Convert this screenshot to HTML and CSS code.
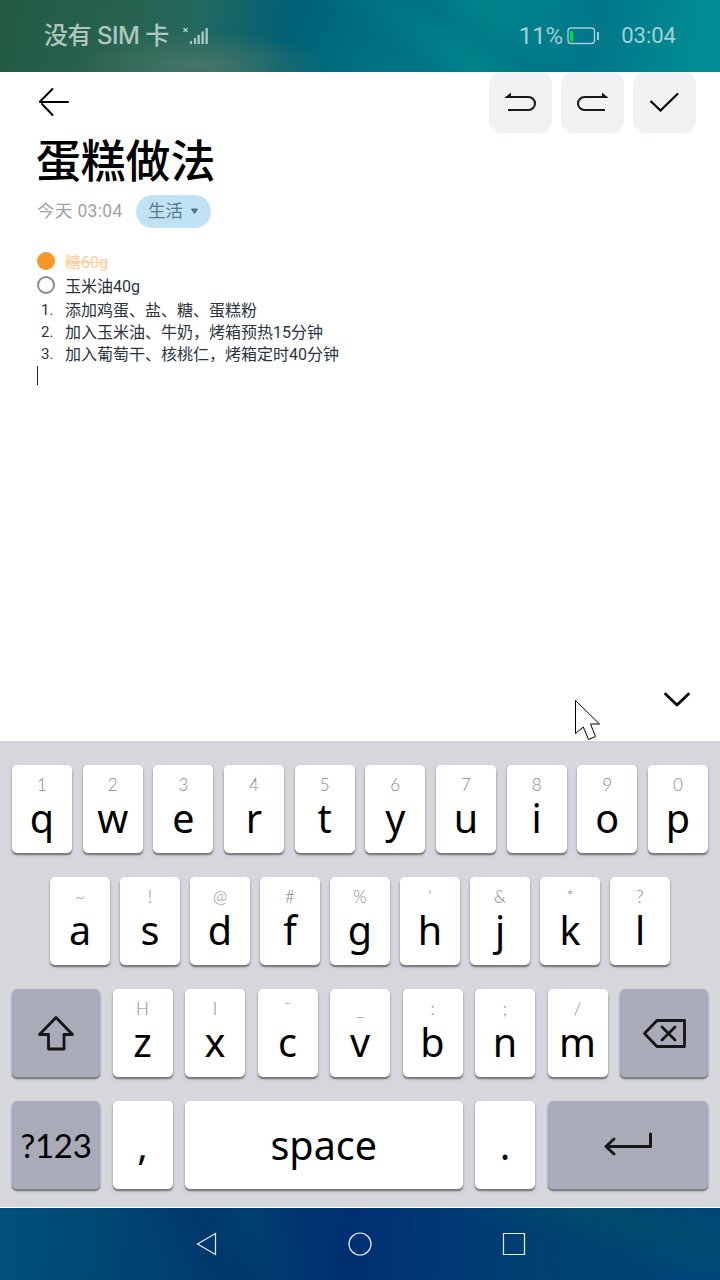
FILE: index.html
```html
<!DOCTYPE html>
<html lang="zh-CN">
<head>
<meta charset="utf-8">
<title>蛋糕做法</title>
<link rel="stylesheet" href="styles.css">
</head>
<body>
<div class="screen">
  <header class="status">
    <div class="carrier">
      <span class="sim">没有 SIM 卡</span>
      <svg class="signal" width="26" height="20" viewBox="0 0 26 20"><path d="M0.500 2l4 4M4.500 2l-4 4" fill="none" stroke="currentColor" stroke-width="1.500"/><path d="M7 15h2v3h-2zM11 12h2v6h-2zM14.500 9h2.300v9h-2.300zM18.500 5.500h2.300v12.500h-2.300zM22.500 2h2.300v16h-2.300z" fill="currentColor"/></svg>
    </div>
    <div class="state">
      <span class="percent">11%</span>
      <svg class="battery" width="33" height="18" viewBox="0 0 33 18"><rect x="1" y="1" width="26.500" height="15.500" rx="3" fill="none" stroke="currentColor" stroke-width="1.400"/><path d="M31 5v8" stroke="currentColor" stroke-width="2"/><path d="M3 4h3v10.500h-3z" fill="#00dc3c"/></svg>
      <span class="clock">03:04</span>
    </div>
  </header>

  <main class="note">
    <div class="toolbar">
      <svg class="back" width="32" height="30" viewBox="0 0 32 30" fill="none" stroke="#000" stroke-width="2" stroke-linecap="round"><path d="M30 15H2M14.500 2L2 14.500M4 17L14.500 28"/></svg>
      <div class="actions">
        <div class="action"><svg width="63" height="61" viewBox="0 0 63 61"><path d="M17 25H39.500A6.500 6.500 0 0 1 39.500 38H19" fill="none" stroke="#17191c" stroke-width="2.100"/><path d="M15.500 26L22 20.500V26z" fill="#17191c"/></svg></div>
        <div class="action"><svg width="63" height="61" viewBox="0 0 63 61"><path d="M46 25H23.500A6.500 6.500 0 0 0 23.500 38H44" fill="none" stroke="#17191c" stroke-width="2.100"/><path d="M47.500 26L41 20.500V26z" fill="#17191c"/></svg></div>
        <div class="action"><svg width="63" height="61" viewBox="0 0 63 61"><path d="M17.500 29L27.500 38.500L45 21.500" fill="none" stroke="#000" stroke-width="2.200"/></svg></div>
      </div>
    </div>
    <h1 class="title">蛋糕做法</h1>
    <div class="meta">
      <span class="date">今天 03:04</span>
      <span class="tag">生活<svg width="9" height="7" viewBox="0 0 9 7"><path d="M1.500 1h6l-3 4.500z" fill="#55707e" stroke="#55707e" stroke-linejoin="round"/></svg></span>
    </div>
    <div class="content">
      <div class="line check done"><i class="mark"></i><span class="words">糖60g</span></div>
      <div class="line check"><i class="mark"></i><span class="words">玉米油40g</span></div>
      <div class="line"><span class="num">1.</span><span class="words">添加鸡蛋、盐、糖、蛋糕粉</span></div>
      <div class="line"><span class="num">2.</span><span class="words">加入玉米油、牛奶，烤箱预热15分钟</span></div>
      <div class="line"><span class="num">3.</span><span class="words">加入葡萄干、核桃仁，烤箱定时40分钟</span></div>
      <div class="caret"></div>
    </div>
    <svg class="hide-keys" width="30" height="20" viewBox="0 0 30 20"><path d="M3.500 5L15 16L26.500 5" fill="none" stroke="#000" stroke-width="2.800" stroke-linecap="round" stroke-linejoin="round"/></svg>
    <svg class="pointer" width="28" height="44" viewBox="0 0 28 44"><path d="M1.500 1.500V34.500L9.300 28L14.500 40.500L21.500 37.500L16.500 25H25.500z" fill="#fff" stroke="#000" stroke-width="1"/></svg>
  </main>

  <section class="keyboard">
    <div class="row">
      <div class="key"><small>1</small>q</div><div class="key"><small>2</small>w</div><div class="key"><small>3</small>e</div><div class="key"><small>4</small>r</div><div class="key"><small>5</small>t</div><div class="key"><small>6</small>y</div><div class="key"><small>7</small>u</div><div class="key"><small>8</small>i</div><div class="key"><small>9</small>o</div><div class="key"><small>0</small>p</div>
    </div>
    <div class="row inset">
      <div class="key"><small>~</small>a</div><div class="key"><small>!</small>s</div><div class="key"><small>@</small>d</div><div class="key"><small>#</small>f</div><div class="key"><small>%</small>g</div><div class="key"><small>'</small>h</div><div class="key"><small>&amp;</small>j</div><div class="key"><small>*</small>k</div><div class="key"><small>?</small>l</div>
    </div>
    <div class="row">
      <div class="key dark"><svg width="88" height="88" viewBox="0 0 88 88"><path d="M44 28.500L27.500 45.500H36.500V60H52V45.500H60.500z" fill="none" stroke="#151515" stroke-width="2.800" stroke-linejoin="round"/></svg></div>
      <div class="key"><small>H</small>z</div><div class="key"><small>I</small>x</div><div class="key"><small>¯</small>c</div><div class="key"><small>_</small>v</div><div class="key"><small>:</small>b</div><div class="key"><small>;</small>n</div><div class="key"><small>/</small>m</div>
      <div class="key dark"><svg width="88" height="88" viewBox="0 0 88 88"><path d="M24.500 44.500L37 31.500H64.500V57.500H37zM42 38L55 51M55 38L42 51" fill="none" stroke="#151515" stroke-width="2.800" stroke-linejoin="round" stroke-linecap="round"/></svg></div>
    </div>
    <div class="row">
      <div class="key dark mode">?123</div>
      <div class="key plain">,</div>
      <div class="key plain space">space</div>
      <div class="key plain">.</div>
      <div class="key dark enter"><svg width="160" height="88" viewBox="0 0 160 88"><path d="M102.500 33V45.500H58M66 38L58 45.500L66 53" fill="none" stroke="#151515" stroke-width="3" stroke-linejoin="round" stroke-linecap="round"/></svg></div>
    </div>
  </section>

  <nav class="navbar">
    <svg width="24" height="24" viewBox="0 0 24 24"><path d="M20.500 1.500V22.500L2.500 12z"/></svg>
    <svg width="24" height="24" viewBox="0 0 24 24"><circle cx="12" cy="12" r="11"/></svg>
    <svg width="24" height="24" viewBox="0 0 24 24"><path d="M1.500 1.500h21v21h-21z"/></svg>
  </nav>
</div>
</body>
</html>
```
FILE: styles.css
```css
* { box-sizing: border-box; }
body { margin: 0; font-family: "Noto Sans", "Noto Sans CJK SC", sans-serif; }
svg { display: block; flex: none; }
.screen { width: 720px; height: 1280px; display: flex; flex-direction: column; overflow: hidden; background: #fff; }

.status {
  height: 72px; flex: none; padding: 0 44px; display: flex; justify-content: space-between; align-items: center;
  color: rgba(226, 240, 240, .72); font-family: "Roboto", "Noto Sans CJK SC", sans-serif; line-height: 36px; white-space: nowrap;
  background:
    radial-gradient(ellipse 130px 35px at 200px 66px, rgba(75, 119, 103, .9), transparent),
    linear-gradient(32deg, transparent 40%, rgba(0, 98, 120, .3) 51%, transparent 58%, rgba(0, 98, 120, .25) 64%, transparent 70%),
    linear-gradient(100deg, #235b44 0%, #27634f 18%, #226860 28%, #006175 40%, #007586 53%, #00848c 67%, #00778a 82%, #008c93 96%);
}
.carrier, .state { display: flex; align-items: center; }
.sim { font-size: 24px; width: 139px; font-family: "Inter", "Noto Sans CJK SC", sans-serif; font-weight: 500; letter-spacing: -.5px; }
.percent { font-size: 24px; }
.battery { margin-left: 4px; }
.clock { font-size: 22px; margin-left: 21px; }

.note { position: relative; height: 669px; flex: none; padding-left: 37px; }
.toolbar { height: 61px; display: flex; justify-content: space-between; padding-right: 24px; align-items: center; }
.back { margin: -2px 0 0 1px; }
.actions { display: flex; gap: 9px; }
.action { width: 63px; height: 61px; border-radius: 12px; background: #f1f2f4; }
.title { margin: -4px 0 0 -1px; font: 500 45px/60px "Noto Sans CJK SC", sans-serif; letter-spacing: -.2px; }
.meta { display: flex; align-items: center; height: 36px; margin-top: 4px; font-family: "Roboto", "Noto Sans CJK SC", sans-serif; font-size: 17.500px; line-height: 24px; }
.date { width: 99px; color: #a0a2a8; white-space: nowrap; letter-spacing: .35px; }
.tag { display: flex; align-items: center; gap: 7px; width: 75px; height: 33px; padding: 0 0 0 12px; border-radius: 17px; background: #bfe3f4; color: #5f7a87; }
.content { margin-top: 20px; font-family: "Roboto", "Noto Sans CJK SC", sans-serif; font-size: 16px; color: #2b3440; }
.line { display: flex; align-items: center; height: 22px; white-space: nowrap; }
.check { height: 24px; }
.check + .line:not(.check) { margin-top: 1px; }
.mark { width: 18px; height: 18px; margin-right: 10px; border: 2px solid #868b94; border-radius: 50%; }
.done .mark { background: #fa9623; border-color: #fa9623; }
.done .words { color: #ffcc99; text-decoration: line-through; }
.num { width: 28px; padding: 1px 0 0 4px; font-size: 15px; }
.caret { width: 1px; height: 19px; margin-top: 2px; background: #222; }
.hide-keys { position: absolute; left: 662px; top: 617px; }
.pointer { position: absolute; left: 574px; top: 627px; }

.keyboard { height: 467px; flex: none; padding: 24px 12px 0; display: flex; flex-direction: column; gap: 24px; background: #d6d7dc; border-bottom: 1px solid #fff; }
.row { display: flex; justify-content: space-between; height: 88px; }
.inset { padding: 0 38px; }
.key {
  width: 60px; height: 88px; flex: none; border-radius: 5px; background: #fff; color: #000; text-align: center;
  font-size: 39.500px; line-height: 44px; box-shadow: 0 2px 1px #7d8083, 0 2px 3px rgba(0, 0, 0, .3);
}
.key small { display: block; height: 31px; padding-top: 9px; font: 300 17px/22px "Lato", sans-serif; color: #888; }
.dark { width: 88px; background: #a9abb8; }
.plain { line-height: 88px; }
.mode { font-family: "Lato", sans-serif; font-size: 33px; line-height: 88px; letter-spacing: -.3px; }
.space { width: 277.500px; }
.enter { width: 160.500px; }

.navbar {
  flex: 1; display: flex; justify-content: center; align-items: center; gap: 129.500px;
  background:
    linear-gradient(65deg, transparent 20%, rgba(0, 38, 102, .35) 30%, transparent 38%, rgba(0, 40, 106, .3) 45%, transparent 52%),
    linear-gradient(15deg, transparent 70%, rgba(0, 83, 104, .5) 85%, transparent),
    linear-gradient(95deg, #00517c 0%, #004474 18%, #00406f 34%, #003073 49%, #003a74 64%, #004270 80%, #00467b 100%);
}
.navbar svg { fill: none; stroke: #e4eef6; stroke-width: 1.200; }
```
